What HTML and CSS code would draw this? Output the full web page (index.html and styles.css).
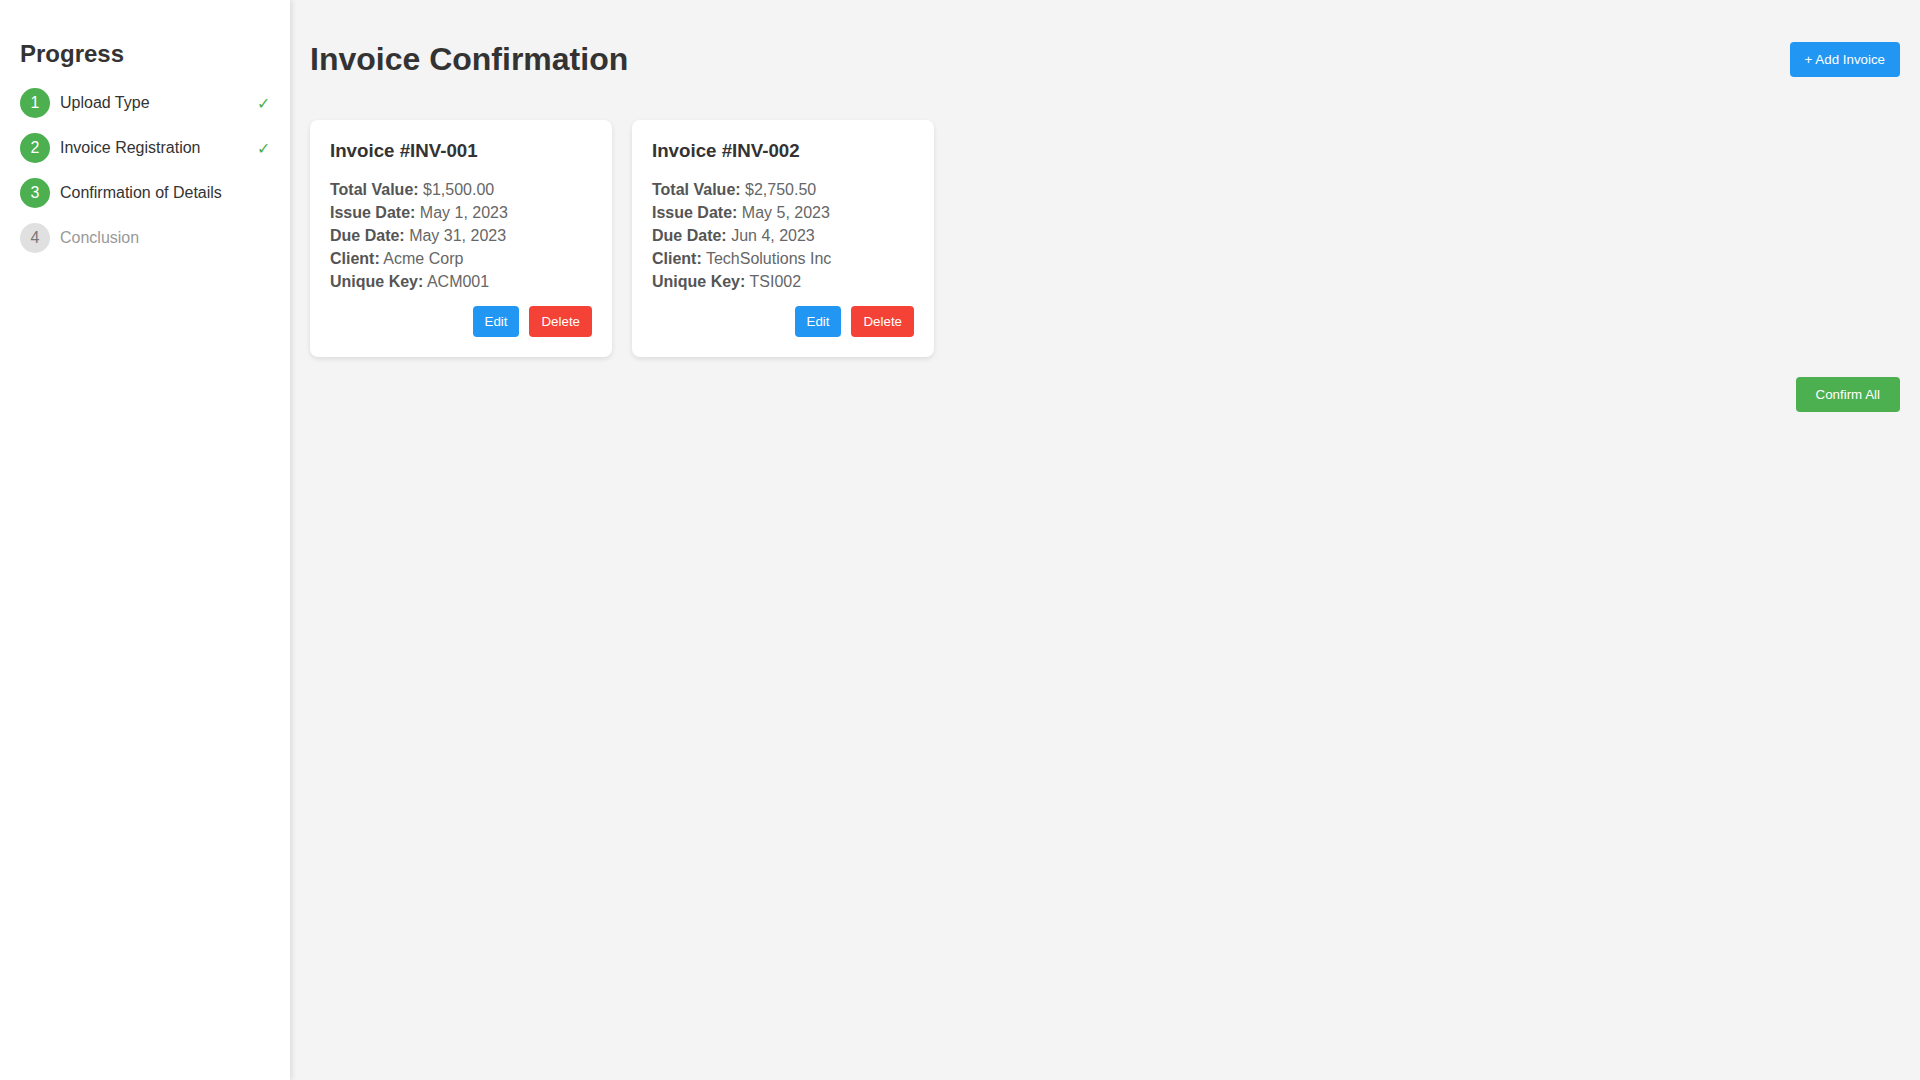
FILE: index.html
```html
<!DOCTYPE html>
<html lang="en">
<head>
    <meta charset="UTF-8">
    <meta name="viewport" content="width=device-width, initial-scale=1.0">
    <title>Invoice Confirmation</title>
    <link rel="stylesheet" href="styles.css">
</head>
<body>
    <div class="sidebar">
        <h2>Progress</h2>
        <div class="step done">
            <span class="step-number">1</span>
            <span class="step-label">Upload Type</span>
            <span class="step-check">&#10003;</span>
        </div>
        <div class="step done">
            <span class="step-number">2</span>
            <span class="step-label">Invoice Registration</span>
            <span class="step-check">&#10003;</span>
        </div>
        <div class="step active">
            <span class="step-number">3</span>
            <span class="step-label">Confirmation of Details</span>
        </div>
        <div class="step">
            <span class="step-number">4</span>
            <span class="step-label">Conclusion</span>
        </div>
    </div>

    <div class="main">
        <div class="header">
            <h1>Invoice Confirmation</h1>
            <button class="btn btn-blue btn-add">+ Add Invoice</button>
        </div>

        <div class="cards">
            <div class="card">
                <h3>Invoice #INV-001</h3>
                <p><strong>Total Value:</strong> $1,500.00</p>
                <p><strong>Issue Date:</strong> May 1, 2023</p>
                <p><strong>Due Date:</strong> May 31, 2023</p>
                <p><strong>Client:</strong> Acme Corp</p>
                <p><strong>Unique Key:</strong> ACM001</p>
                <div class="card-actions">
                    <button class="btn btn-small btn-blue">Edit</button>
                    <button class="btn btn-small btn-red">Delete</button>
                </div>
            </div>
            <div class="card">
                <h3>Invoice #INV-002</h3>
                <p><strong>Total Value:</strong> $2,750.50</p>
                <p><strong>Issue Date:</strong> May 5, 2023</p>
                <p><strong>Due Date:</strong> Jun 4, 2023</p>
                <p><strong>Client:</strong> TechSolutions Inc</p>
                <p><strong>Unique Key:</strong> TSI002</p>
                <div class="card-actions">
                    <button class="btn btn-small btn-blue">Edit</button>
                    <button class="btn btn-small btn-red">Delete</button>
                </div>
            </div>
        </div>

        <div class="confirm-row">
            <button class="btn btn-green btn-confirm">Confirm All</button>
        </div>
    </div>
</body>
</html>
```

FILE: styles.css
```css
body {
    font-family: 'Liberation Sans', Arial, sans-serif;
    background-color: #f4f4f4;
    color: #333;
    margin: 0;
    padding: 0;
    display: flex;
    min-height: 100vh;
}

.sidebar {
    width: 250px;
    padding: 20px;
    background-color: #fff;
    box-shadow: 2px 0 5px rgba(0, 0, 0, 0.1);
}

.sidebar h2 {
    font-size: 24px;
    margin: 20px 0;
}

.step {
    display: flex;
    align-items: center;
    margin-bottom: 15px;
    font-size: 16px;
}

.step-number {
    width: 30px;
    height: 30px;
    border-radius: 50%;
    background-color: #e0e0e0;
    color: #777;
    display: flex;
    align-items: center;
    justify-content: center;
    margin-right: 10px;
}

.step.done .step-number,
.step.active .step-number {
    background-color: #4CAF50;
    color: #fff;
}

.step .step-label {
    color: #999;
}

.step.done .step-label,
.step.active .step-label {
    color: #333;
}

.step-check {
    margin-left: auto;
    color: #4CAF50;
    font-size: 16px;
}

.main {
    flex: 1;
    padding: 20px;
}

.header {
    display: flex;
    justify-content: space-between;
    align-items: center;
    margin-bottom: 21px;
}

.header h1 {
    font-size: 32px;
    margin: 21px 0;
}

.cards {
    display: flex;
    flex-wrap: wrap;
    gap: 20px;
}

.card {
    width: 262px;
    padding: 20px;
    background-color: #fff;
    border-radius: 8px;
    box-shadow: 0 2px 5px rgba(0, 0, 0, 0.1);
}

.card h3 {
    font-size: 18.72px;
    margin: 0 0 18.72px;
    color: #333;
}

.card p {
    margin: 5px 0;
    font-size: 16px;
    color: #666;
}

.card p strong {
    color: #555;
}

.card-actions {
    display: flex;
    justify-content: flex-end;
    gap: 10px;
    margin-top: 15px;
}

.btn {
    font-family: 'Liberation Sans', Arial, sans-serif;
    font-size: 13.33px;
    border: none;
    border-radius: 4px;
    color: #fff;
    cursor: pointer;
    padding: 10px 15px;
}

.btn-small {
    padding: 8px 12px;
}

.btn-confirm {
    padding: 10px 20px;
}

.btn-blue {
    background-color: #2196F3;
}

.btn-red {
    background-color: #f44336;
}

.btn-green {
    background-color: #4CAF50;
}

.confirm-row {
    display: flex;
    justify-content: flex-end;
    margin-top: 20px;
}
```
